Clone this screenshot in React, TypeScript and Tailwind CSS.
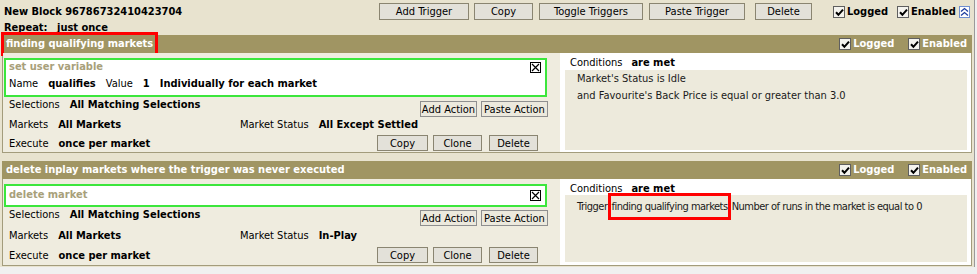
import React from "react";

const FONT =
  "font-['DejaVu_Sans_Condensed','DejaVu_Sans',sans-serif] font-stretch-semi-condensed";

function TopBtn({ children, w }: { children: React.ReactNode; w: string }) {
  return (
    <button
      className={`${w} shrink-0 h-[17px] border border-[#8a8571] bg-[#e3e1d9] text-[11px] leading-none text-black flex items-center justify-center`}
    >
      {children}
    </button>
  );
}

function SmallBtn({ children, w }: { children: React.ReactNode; w: string }) {
  return (
    <button
      className={`${w} shrink-0 h-[16px] border border-[#8f8f8f] bg-[#ece9dd] text-[11px] leading-none text-black flex items-center justify-center`}
    >
      {children}
    </button>
  );
}

function TopBtnSmall({ children, w }: { children: React.ReactNode; w: string }) {
  return (
    <button
      className={`${w} shrink-0 h-[16px] border border-[#8a8571] bg-[#e3e1d9] text-[11px] leading-none text-black flex items-center justify-center`}
    >
      {children}
    </button>
  );
}

function Check() {
  return (
    <span className="inline-flex w-[12px] h-[12px] border border-[#5f5f5f] bg-[#f4f3ee] items-center justify-center shrink-0">
      <svg width="9" height="9" viewBox="0 0 9 9">
        <path d="M1 4.3 L3.4 6.8 L8 1.6" stroke="#000" strokeWidth="2" fill="none" />
      </svg>
    </span>
  );
}

function CloseX() {
  return (
    <svg width="11" height="11" viewBox="0 0 11 11" className="shrink-0">
      <rect x="0.5" y="0.5" width="10" height="10" fill="#fff" stroke="#000" />
      <path d="M2 2 L9 9 M9 2 L2 9" stroke="#000" strokeWidth="1.2" />
    </svg>
  );
}

function Collapse() {
  return (
    <span className="inline-flex shrink-0 w-[11px] h-[12px] border border-[#6f8fd0] bg-white items-center justify-center">
      <svg width="9" height="10" viewBox="0 0 9 10">
        <path d="M1 4.5 L4.5 1.5 L8 4.5 M1 8.5 L4.5 5.5 L8 8.5" stroke="#1f3f9f" strokeWidth="1.3" fill="none" />
      </svg>
    </span>
  );
}

function Band({ title, boxed }: { title: string; boxed?: boolean }) {
  return (
    <div className="h-[18px] bg-[#a09563] flex items-center">
      <span
        className={`ml-[2px] px-[2px] h-[18px] leading-[18px] font-bold text-white text-[11px] ${
          boxed ? "outline-[3px] outline-solid outline-[#ff0000]" : ""
        }`}
      >
        {title}
      </span>
      <div className="ml-auto flex items-center font-bold text-white text-[11px]">
        <Check />
        <span className="ml-[2px] w-[55px]">Logged</span>
        <Check />
        <span className="ml-[2px] mr-[5px]">Enabled</span>
      </div>
    </div>
  );
}

function Rows({ status, first }: { status: string; first: boolean }) {
  return (
    <div className="pl-[6px] pr-[12px] text-[11px] text-black">
      <div className="flex h-[21px] items-start">
        <span className="leading-[14px] mt-[1px] mr-[10px]">Selections</span>
        <span className="leading-[14px] mt-[1px] font-bold">All Matching Selections</span>
        <div className={`ml-auto flex gap-[4px] ${first ? "mt-[4px]" : "mt-[3px]"}`}>
          <SmallBtn w="w-[57px]">Add Action</SmallBtn>
          <SmallBtn w="w-[67px]">Paste Action</SmallBtn>
        </div>
      </div>
      <div className={`flex h-[14px] items-center ${first ? "" : "mt-[1px]"}`}>
        <div className="w-[231px] flex">
          <span className="mr-[10px]">Markets</span>
          <span className="font-bold">All Markets</span>
        </div>
        <span className="mr-[10px]">Market Status</span>
        <span className="font-bold">{status}</span>
      </div>
      <div className={`flex items-start ${first ? "pt-[3px]" : "pt-[4px]"}`}>
        <span className="leading-[16px] mt-[1px] mr-[10px]">Execute</span>
        <span className="leading-[16px] mt-[1px] font-bold">once per market</span>
        <div className="ml-auto mr-[10px] flex">
          <TopBtnSmall w="w-[51px]">Copy</TopBtnSmall>
          <span className="w-[5px]" />
          <TopBtnSmall w="w-[49px]">Clone</TopBtnSmall>
          <span className="w-[7px]" />
          <TopBtnSmall w="w-[49px]">Delete</TopBtnSmall>
        </div>
      </div>
    </div>
  );
}

export default function App() {
  return (
    <div className={`w-[977px] h-[274px] bg-[#f0f0f0] ${FONT} text-[11px] text-black`}>
      <div className="w-[975px] h-[267px] bg-[#e8e3cf] border-r border-[#9a9a9a] px-[2px]">
        {/* header */}
        <div className="h-[35px]">
          <div className="flex items-start pt-[3px] h-[21px]">
            <span className="ml-[2px] w-[375px] shrink-0 font-bold leading-[17px]">
              New Block 96786732410423704
            </span>
            <div className="flex shrink-0">
              <TopBtn w="w-[90px]">Add Trigger</TopBtn>
              <span className="w-[5px] shrink-0" />
              <TopBtn w="w-[59px]">Copy</TopBtn>
              <span className="w-[6px] shrink-0" />
              <TopBtn w="w-[104px]">Toggle Triggers</TopBtn>
              <span className="w-[6px] shrink-0" />
              <TopBtn w="w-[96px]">Paste Trigger</TopBtn>
              <span className="w-[10px] shrink-0" />
              <TopBtn w="w-[57px]">Delete</TopBtn>
            </div>
            <div className="ml-[21px] mt-[1px] flex items-center font-bold shrink-0">
              <Check />
              <span className="ml-[2px] w-[50px]">Logged</span>
              <Check />
              <span className="ml-[2px] w-[48px]">Enabled</span>
              <Collapse />
            </div>
          </div>
          <div className="flex h-[14px] items-center font-bold">
            <span className="ml-[2px] w-[53px]">Repeat:</span>
            <span>just once</span>
          </div>
        </div>

        {/* trigger 1 */}
        <Band title="finding qualifying markets" boxed />
        <div className="flex h-[100px] border-x border-b border-[#a39c7c]">
          <div className="w-[557px] bg-[#efecdf]">
            <div className="mt-[5px] ml-[1px] w-[543px] h-[39px] border-2 border-[#3ce63c] bg-white pl-[3px] pr-[4px]">
              <div className="flex h-[14px] items-start justify-between">
                <span className="font-bold text-[#a8a07a] leading-[14px]">set user variable</span>
                <span className="mt-[2px]">
                  <CloseX />
                </span>
              </div>
              <div className="flex h-[14px] items-center mt-[3px]">
                <span className="mr-[10px]">Name</span>
                <span className="font-bold mr-[10px]">qualifies</span>
                <span className="mr-[10px]">Value</span>
                <span className="font-bold mr-[10px]">1</span>
                <span className="font-bold">Individually for each market</span>
              </div>
            </div>
            <Rows status="All Except Settled" first />
          </div>
          <div className="flex-1 bg-white flex flex-col">
            <div className="h-[17px] pt-[3px] pl-[10px] flex leading-[14px]">
              <span className="mr-[9px]">Conditions</span>
              <span className="font-bold">are met</span>
            </div>
            <div className="flex-1 ml-[5px] mr-[4px] mb-[2px] bg-[#edeadc] pl-[12px] leading-[17px] text-[#1a1a1a]">
              <div>Market's Status is Idle</div>
              <div>and Favourite's Back Price is equal or greater than 3.0</div>
            </div>
          </div>
        </div>

        {/* trigger 2 */}
        <div className="mt-[8px]">
          <Band title="delete inplay markets where the trigger was never executed" />
        </div>
        <div className="flex h-[87px] border-x border-b border-[#a39c7c]">
          <div className="w-[557px] bg-[#efecdf]">
            <div className="mt-[5px] ml-[1px] w-[543px] h-[23px] border-2 border-[#3ce63c] bg-white pl-[3px] pr-[4px]">
              <div className="flex h-[19px] items-center justify-between">
                <span className="font-bold text-[#a8a07a]">delete market</span>
                <CloseX />
              </div>
            </div>
            <Rows status="In-Play" first={false} />
          </div>
          <div className="flex-1 bg-white flex flex-col">
            <div className="h-[16px] pt-[3px] pl-[10px] flex leading-[14px]">
              <span className="mr-[9px]">Conditions</span>
              <span className="font-bold">are met</span>
            </div>
            <div className="flex-1 ml-[5px] mr-[4px] mb-[3px] bg-[#edeadc] pl-[12px] pt-[1px] leading-[17px] text-[#1a1a1a]">
              <div className="tracking-[-0.5px]">
                Trigger
                <span className="inline-block ml-[4px] mr-[4px] leading-[21px] outline-[3px] outline-solid outline-[#ff0000]">
                  finding qualifying markets
                </span>
                Number of runs in the market is equal to 0
              </div>
            </div>
          </div>
        </div>
      </div>
    </div>
  );
}
